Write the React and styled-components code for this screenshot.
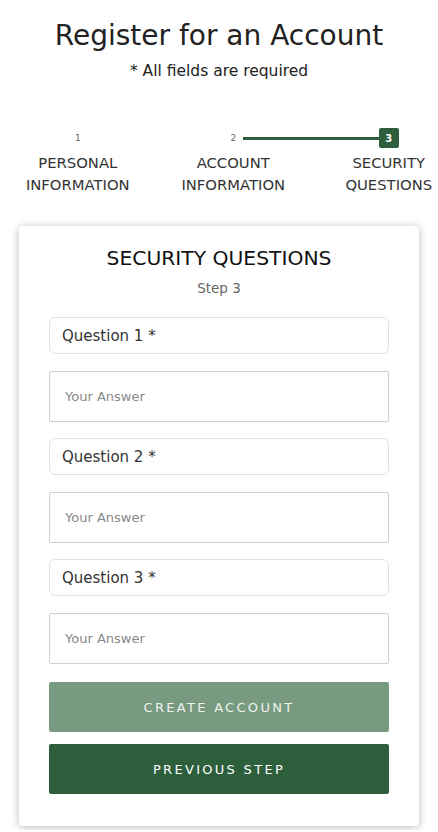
import React from "react";
import styled, { createGlobalStyle } from "styled-components";

const GlobalStyle = createGlobalStyle`
  body {
    margin: 0;
    background: #ffffff;
    font-family: "DejaVu Sans", "Open Sans", sans-serif;
    overflow-x: hidden;
  }
`;

const steps = [
  { number: 1, label: ["PERSONAL", "INFORMATION"] },
  { number: 2, label: ["ACCOUNT", "INFORMATION"] },
  { number: 3, label: ["SECURITY", "QUESTIONS"], active: true },
];

const questions = ["Question 1 *", "Question 2 *", "Question 3 *"];

const App = () => {
  return (
    <Page>
      <GlobalStyle />
      <Title>Register for an Account</Title>
      <Subtitle>* All fields are required</Subtitle>
      <Stepper>
        {steps.map((step) => (
          <Step key={step.number}>
            <StepNumber $active={step.active}>{step.number}</StepNumber>
            <StepLabel>
              {step.label[0]}
              <br />
              {step.label[1]}
            </StepLabel>
          </Step>
        ))}
      </Stepper>
      <Card>
        <CardTitle>SECURITY QUESTIONS</CardTitle>
        <CardStep>Step 3</CardStep>
        <Fields>
          {questions.map((q) => (
            <Group key={q}>
              <Select>{q}</Select>
              <Answer placeholder="Your Answer" />
            </Group>
          ))}
        </Fields>
        <Buttons>
          <Button $light>CREATE ACCOUNT</Button>
          <Button>PREVIOUS STEP</Button>
        </Buttons>
      </Card>
    </Page>
  );
};

const Page = styled.div`
  width: 438px;
  padding-top: 16px;
  padding-bottom: 4px;
  display: flex;
  flex-direction: column;
  align-items: center;
`;

const Title = styled.h1`
  margin: 0;
  font-size: 28px;
  font-weight: 400;
  line-height: 40px;
  color: #222;
`;

const Subtitle = styled.p`
  margin: 5px 0 0;
  font-size: 15.5px;
  line-height: 20px;
  color: #222;
`;

const Stepper = styled.div`
  align-self: flex-start;
  width: 438px;
  overflow: hidden;
  margin-top: 47px;
  display: grid;
  grid-template-columns: repeat(3, 155.5px);
`;

const Step = styled.div`
  display: flex;
  flex-direction: column;
  align-items: center;
`;

const StepNumber = styled.div`
  position: relative;
  width: 20px;
  height: 20px;
  display: flex;
  align-items: center;
  justify-content: center;
  border-radius: 2px;
  font-size: ${(p) => (p.$active ? "10px" : "9px")};
  font-weight: ${(p) => (p.$active ? 700 : 400)};
  color: ${(p) => (p.$active ? "#ffffff" : "#666")};
  background: ${(p) => (p.$active ? "#2d5f3d" : "transparent")};

  &::before {
    content: "";
    display: ${(p) => (p.$active ? "block" : "none")};
    position: absolute;
    right: 100%;
    top: 9px;
    width: 136px;
    height: 3px;
    background: #2d5f3d;
  }
`;

const StepLabel = styled.div`
  margin-top: 4px;
  text-align: center;
  font-size: 14.8px;
  line-height: 22px;
  color: #333;
`;

const Card = styled.div`
  margin-top: 30px;
  width: 400px;
  box-sizing: border-box;
  padding: 19px 30px 32px;
  background: #ffffff;
  border-radius: 4px;
  box-shadow: 0 1px 9px rgba(0, 0, 0, 0.28);
  display: flex;
  flex-direction: column;
  align-items: center;
`;

const CardTitle = styled.h2`
  margin: 0;
  font-size: 20.3px;
  font-weight: 400;
  line-height: 26px;
  color: #111;
`;

const CardStep = styled.div`
  margin-top: 8px;
  font-size: 13.5px;
  line-height: 18px;
  color: #666;
`;

const Fields = styled.div`
  margin-top: 20px;
  width: 100%;
  display: flex;
  flex-direction: column;
  gap: 16px;
`;

const Group = styled.div`
  display: flex;
  flex-direction: column;
  gap: 17px;
`;

const Select = styled.div`
  height: 37px;
  box-sizing: border-box;
  padding: 0 12px;
  display: flex;
  align-items: center;
  border: 1px solid #e2e2e2;
  border-radius: 6px;
  font-size: 15px;
  color: #333;
`;

const Answer = styled.input`
  height: 51px;
  box-sizing: border-box;
  padding: 0 15px;
  border: 1px solid #cfcfcf;
  border-radius: 2px;
  font-family: inherit;
  font-size: 13px;
  outline: none;

  &::placeholder {
    color: #888;
  }
`;

const Buttons = styled.div`
  margin-top: 18px;
  width: 100%;
  display: flex;
  flex-direction: column;
  gap: 12px;
`;

const Button = styled.button`
  height: 50px;
  border: none;
  border-radius: 2px;
  font-family: inherit;
  font-size: 13px;
  letter-spacing: 2.3px;
  color: ${(p) => (p.$light ? "#eef3ee" : "#ffffff")};
  background: ${(p) => (p.$light ? "#789a80" : "#2d5f3d")};
  cursor: pointer;
`;

export default App;
